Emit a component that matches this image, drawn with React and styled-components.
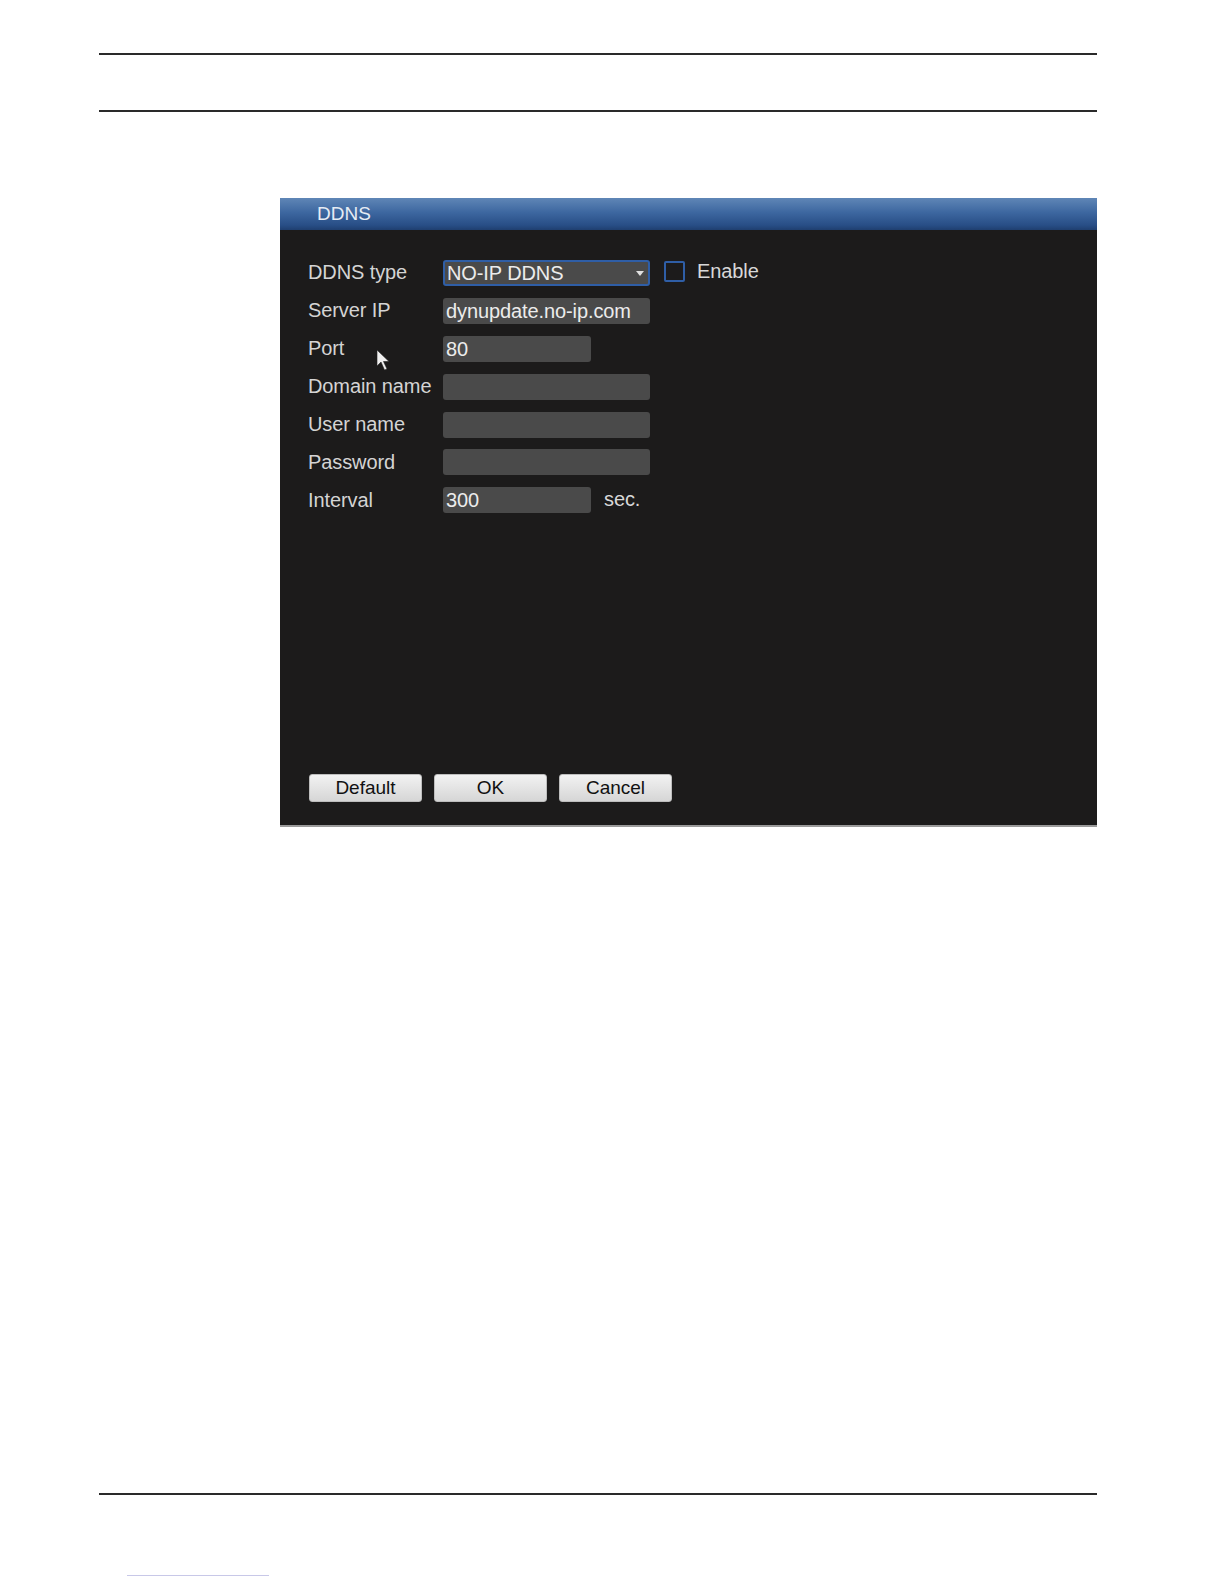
import React from "react";
import styled, { createGlobalStyle } from "styled-components";

const Global = createGlobalStyle`
  html, body { margin: 0; padding: 0; background: #fff; overflow: hidden; }
  body { font-family: "Liberation Sans", Arial, sans-serif; }
`;

const Page = styled.div`
  width: 100%;
  min-height: 100vh;
  box-sizing: border-box;
  padding: 53px 127px 0 99px;
  display: flex;
  flex-direction: column;
  background: #fff;
`;

const Rule = styled.div`
  height: 2px;
  background: #2a2a2a;
  margin-top: ${(p) => p.$top || 0}px;
`;

const Shot = styled.div`
  position: relative;
  margin-top: 86px;
  margin-left: 181px;
  width: 817px;
  height: 629px;
  background: #1c1b1b;
  display: flex;
  flex-direction: column;
  border-bottom: 2px solid #9a9a9a;
  box-sizing: border-box;
`;

const TitleBar = styled.div`
  height: 32px;
  background: linear-gradient(#5f86b6 0%, #3d67a0 45%, #284e86 85%, #1f3f70 100%);
  color: #e6ecf4;
  font-size: 19px;
  line-height: 32px;
  padding-left: 37px;
`;

const Body = styled.div`
  flex: 1;
  display: flex;
  flex-direction: column;
  padding: 24px 28px 23px 28px;
`;

const Row = styled.div`
  height: 37.9px;
  display: flex;
  align-items: center;
`;

const Label = styled.div`
  width: 135px;
  color: #d4d4d4;
  font-size: 20px;
  letter-spacing: -0.1px;
`;

const Field = styled.div`
  position: relative;
  width: ${(p) => p.$w}px;
  height: 26px;
  box-sizing: border-box;
  background: #4a4a4a;
  border-radius: 3px;
  border: ${(p) => (p.$select ? "2px solid #2f5ea6" : "none")};
  color: #ececec;
  font-size: 20px;
  line-height: ${(p) => (p.$select ? 22 : 26)}px;
  padding-left: ${(p) => (p.$select ? 2 : 3)}px;
  letter-spacing: -0.1px;
  white-space: nowrap;
  overflow: hidden;
`;

const Arrow = styled.span`
  position: absolute;
  right: 4px;
  top: 9px;
  width: 0;
  height: 0;
  border-left: 4px solid transparent;
  border-right: 4px solid transparent;
  border-top: 5px solid #e0e0e0;
`;

const Check = styled.div`
  width: 21px;
  height: 21px;
  box-sizing: border-box;
  border: 2px solid #2f5ea6;
  border-radius: 2px;
  margin-left: 14px;
  margin-top: -3px;
`;

const Side = styled.div`
  color: #d8d8d8;
  font-size: 20px;
  margin-left: ${(p) => p.$ml}px;
  margin-top: ${(p) => p.$mt || 0}px;
  letter-spacing: -0.1px;
`;

const Buttons = styled.div`
  margin-top: auto;
  display: flex;
  gap: 12px;
  padding-left: 1px;
`;

const Button = styled.div`
  width: 113px;
  height: 28px;
  box-sizing: border-box;
  border-radius: 3px;
  background: linear-gradient(#f2f2f2, #d6d6d6);
  border: 1px solid #bdbdbd;
  color: #111;
  font-size: 19px;
  line-height: 26px;
  text-align: center;
`;

const Cursor = styled.svg`
  position: absolute;
  left: 96px;
  top: 151px;
`;

const FootLink = styled.div`
  margin-top: 80px;
  margin-left: 28px;
  width: 142px;
  height: 1px;
  background: #c8c8e8;
`;

const rows = [
  { label: "Server IP", value: "dynupdate.no-ip.com", w: 207 },
  { label: "Port", value: "80", w: 148 },
  { label: "Domain name", value: "", w: 207 },
  { label: "User name", value: "", w: 207 },
  { label: "Password", value: "", w: 207 },
];

export default function App() {
  return (
    <Page>
      <Global />
      <Rule />
      <Rule $top={55} />
      <Shot>
        <TitleBar>DDNS</TitleBar>
        <Body>
          <Row>
            <Label>DDNS type</Label>
            <Field $w={207} $select>
              NO-IP DDNS
              <Arrow />
            </Field>
            <Check />
            <Side $ml={12} $mt={-2}>Enable</Side>
          </Row>
          {rows.map((r) => (
            <Row key={r.label}>
              <Label>{r.label}</Label>
              <Field $w={r.w}>{r.value}</Field>
            </Row>
          ))}
          <Row>
            <Label>Interval</Label>
            <Field $w={148}>300</Field>
            <Side $ml={13} $mt={-2}>sec.</Side>
          </Row>
          <Buttons>
            <Button>Default</Button>
            <Button>OK</Button>
            <Button>Cancel</Button>
          </Buttons>
        </Body>
        <Cursor width="16" height="24" viewBox="0 0 16 24">
          <path d="M1 1 L1 17 L5 13 L8.5 21 L11 20 L7.5 12.5 L13 12.5 Z" fill="#f0f0f0" stroke="#222" strokeWidth="0.6" />
        </Cursor>
      </Shot>
      <Rule $top={666} />
      <FootLink />
    </Page>
  );
}
